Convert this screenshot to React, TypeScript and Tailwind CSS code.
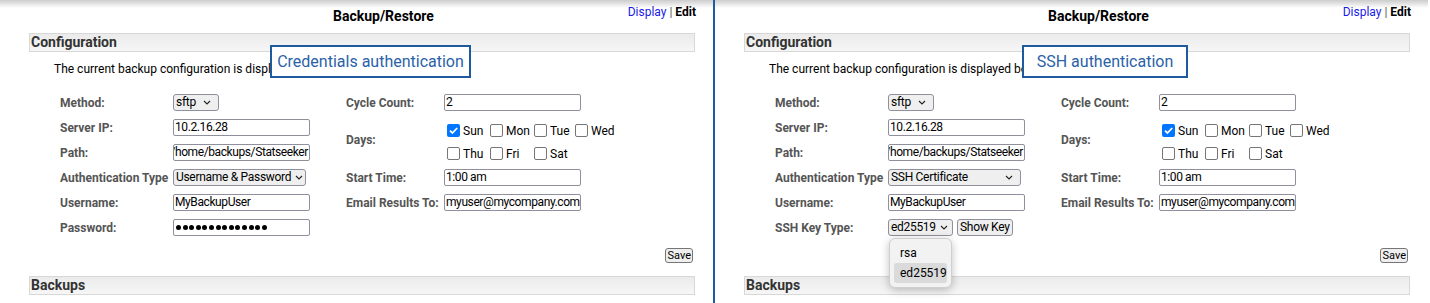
import React from "react";

const Chevron = () => (
  <svg width="8" height="5" viewBox="0 0 8 5" className="shrink-0">
    <path d="M1 1l3 3 3-3" fill="none" stroke="#222" strokeWidth="1.1" />
  </svg>
);

const Box = ({ children }: { children: React.ReactNode }) => (
  <div className="flex h-[17px] w-[137px] items-center overflow-hidden whitespace-nowrap rounded-[2px] border border-[#8f8f9d] bg-white pl-[1px] text-[12px] leading-[15px] tracking-[-0.4px] text-black">
    {children}
  </div>
);

const Sel = ({ value, cls }: { value: string; cls: string }) => (
  <div
    className={
      "flex h-[17px] items-center justify-between gap-[4px] whitespace-nowrap rounded-[3px] border border-[#8f8f9d] bg-[#efefef] pl-[2px] pr-[7px] text-[12px] leading-[15px] tracking-[-0.3px] text-black " +
      cls
    }
  >
    <span>{value}</span>
    <Chevron />
  </div>
);

const Check = ({ on }: { on?: boolean }) =>
  on ? (
    <span className="flex h-[13px] w-[13px] shrink-0 items-center justify-center rounded-[2px] bg-[#0075ff]">
      <svg width="11" height="11" viewBox="0 0 11 11">
        <path d="M2 5.6l2.4 2.4L9.2 3" fill="none" stroke="#fff" strokeWidth="1.8" />
      </svg>
    </span>
  ) : (
    <span className="h-[13px] w-[13px] shrink-0 rounded-[2px] border border-[#767676] bg-white" />
  );

const Day = ({ label, on }: { label: string; on?: boolean }) => (
  <div className="flex items-center gap-[3px]">
    <Check on={on} />
    <span className="text-[12px] leading-[14px] text-black">{label}</span>
  </div>
);

const Bar = ({ title }: { title: string }) => (
  <div className="ml-[29px] mr-[18px] h-[19px] border border-[#d8d8d8] bg-gradient-to-b from-[#ebebeb] to-[#f6f6f6] pl-[1px] text-[14px] font-bold leading-[17px] text-[#333]">
    {title}
  </div>
);

const Label = ({ children, w }: { children: React.ReactNode; w: string }) => (
  <div className={"shrink-0 whitespace-nowrap text-[12px] font-bold leading-[14px] text-[#555] " + w}>{children}</div>
);

const dots = Array.from({ length: 14 });

function Panel({ ssh }: { ssh?: boolean }) {
  return (
    <div className="relative h-[303px] w-[713px] shrink-0 overflow-hidden bg-white">
      <div className="flex h-[33px]">
        <div className="ml-[333px] pt-[8px] text-[14px] font-bold leading-[16px] text-black">Backup/Restore</div>
        <div className="ml-auto mr-[17px] pt-[4px] text-[12px] leading-[16px]">
          <span className="text-[#1a1ae6]">Display</span> <span className="text-[#555]">|</span>{" "}
          <span className="font-bold text-black">Edit</span>
        </div>
      </div>
      <Bar title="Configuration" />
      <p className="ml-[54px] mt-[9px] whitespace-nowrap text-[12px] leading-[16px] text-black">
        The current backup configuration is displayed below.
      </p>

      <div className="ml-[60px] mt-[13px] flex">
        <div className="w-[286px]">
          <div className="flex h-[25px] items-center">
            <Label w="w-[113px]">Method:</Label>
            <Sel value="sftp" cls="w-[46px]" />
          </div>
          <div className="flex h-[25px] items-center">
            <Label w="w-[113px]">Server IP:</Label>
            <Box>10.2.16.28</Box>
          </div>
          <div className="flex h-[25px] items-center">
            <Label w="w-[113px]">Path:</Label>
            <div className="flex h-[17px] w-[137px] items-center justify-end overflow-hidden whitespace-nowrap rounded-[2px] border border-[#8f8f9d] bg-white pr-[1px] text-[12px] leading-[15px] tracking-[-0.4px] text-black">
              /home/backups/Statseeker
            </div>
          </div>
          <div className="flex h-[25px] items-center">
            <Label w="w-[113px]">Authentication Type</Label>
            {ssh ? (
              <Sel value="SSH Certificate" cls="w-[133px]" />
            ) : (
              <Sel value="Username & Password" cls="w-[133px]" />
            )}
          </div>
          <div className="flex h-[25px] items-center">
            <Label w="w-[113px]">Username:</Label>
            <Box>MyBackupUser</Box>
          </div>
          {ssh ? (
            <div className="flex h-[25px] items-center">
              <Label w="w-[113px]">SSH Key Type:</Label>
              <Sel value="ed25519" cls="w-[65px]" />
              <div className="ml-[4px] flex h-[17px] items-center whitespace-nowrap rounded-[3px] border border-[#8f8f9d] bg-[#efefef] px-[2px] text-[12px] leading-[15px] tracking-[-0.3px] text-black">
                Show Key
              </div>
            </div>
          ) : (
            <div className="flex h-[25px] items-center">
              <Label w="w-[113px]">Password:</Label>
              <div
                aria-label="password"
                className="flex h-[17px] w-[137px] items-center gap-[1.6px] rounded-[2px] border border-[#8f8f9d] bg-white px-[2px]"
              >
                {dots.map((_, i) => (
                  <span key={i} className="h-[5px] w-[5px] shrink-0 rounded-full bg-black" />
                ))}
              </div>
            </div>
          )}
        </div>

        <div>
          <div className="flex h-[25px] items-center">
            <Label w="w-[98px]">Cycle Count:</Label>
            <Box>2</Box>
          </div>
          <div className="flex h-[50px] items-center">
            <Label w="w-[98px]">Days:</Label>
            <div className="ml-[3px] grid grid-cols-[43px_44px_41px_auto] grid-rows-[23px_23px] items-center pt-[4px]">
              <Day label="Sun" on />
              <Day label="Mon" />
              <Day label="Tue" />
              <Day label="Wed" />
              <Day label="Thu" />
              <Day label="Fri" />
              <Day label="Sat" />
            </div>
          </div>
          <div className="flex h-[25px] items-center">
            <Label w="w-[98px]">Start Time:</Label>
            <Box>1:00 am</Box>
          </div>
          <div className="flex h-[25px] items-center">
            <Label w="w-[98px]">Email Results To:</Label>
            <Box>myuser@mycompany.com</Box>
          </div>
        </div>
      </div>

      <div className="mr-[20px] mt-[8px] flex justify-end">
        <div className="flex h-[15px] items-center rounded-[3px] border border-[#767676] bg-[#efefef] px-[1px] text-[11px] leading-[13px] text-black">
          Save
        </div>
      </div>
      <div className="mt-[13px]">
        <Bar title="Backups" />
      </div>

      {ssh ? (
        <div className="absolute left-[307px] top-[45px] flex h-[33px] w-[166px] items-center justify-center border-2 border-[#1f5a9e] bg-white pt-[1px] text-[16px] text-[#2a62a8]">
          SSH authentication
        </div>
      ) : (
        <div className="absolute left-[270px] top-[45px] flex h-[33px] w-[201px] items-center justify-center border-2 border-[#1f5a9e] bg-white pt-[1px] text-[16px] text-[#2a62a8]">
          Credentials authentication
        </div>
      )}

      {ssh && (
        <div className="absolute left-[174px] top-[238px] flex h-[50px] w-[63px] flex-col rounded-[6px] border border-[#cfcfcf] bg-[#f2f2f2] px-[4px] pt-[4px] shadow-[0_2px_8px_rgba(0,0,0,0.25)]">
          <div className="h-[20px] pl-[6px] text-[12px] leading-[20px] text-black">rsa</div>
          <div className="h-[20px] rounded-[3px] bg-[#dadada] pl-[6px] text-[12px] leading-[20px] text-black">ed25519</div>
        </div>
      )}
      <div className="pointer-events-none absolute inset-x-0 top-0 h-[8px] bg-gradient-to-b from-black/20 to-transparent" />
    </div>
  );
}

export default function App() {
  return (
    <div className="flex h-[303px] w-[1430px] overflow-hidden bg-white font-['Roboto',sans-serif]">
      <Panel />
      <div className="h-[303px] w-[2px] shrink-0 bg-[#1f5aa6]" />
      <Panel ssh />
    </div>
  );
}
